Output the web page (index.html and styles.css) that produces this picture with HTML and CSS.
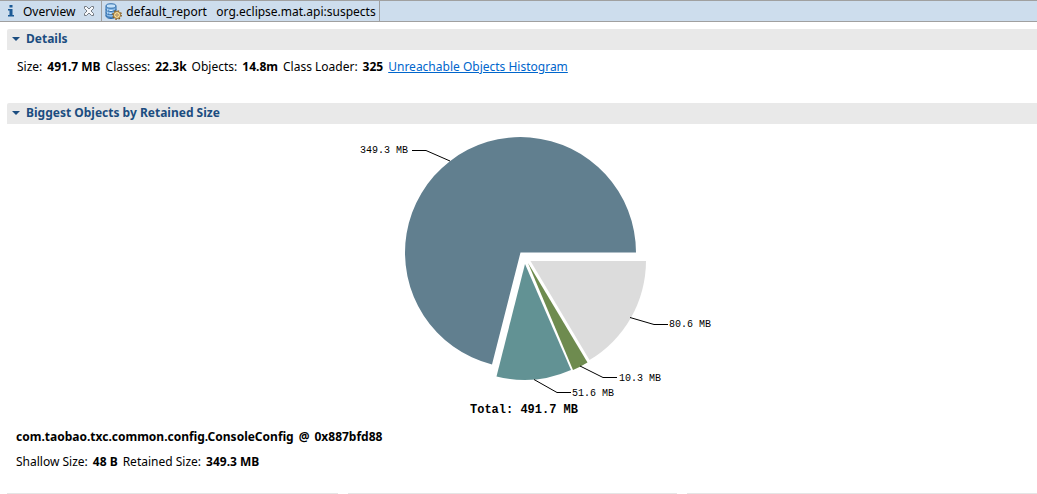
FILE: index.html
```
<!DOCTYPE html>
<html lang="en">
<head>
<meta charset="utf-8">
<title>Overview</title>
<link rel="stylesheet" href="styles.css">
</head>
<body>
<nav class="tabs">
  <div class="tab tab-active">
    <svg class="info-icon" width="8" height="14" viewBox="0 0 8 14" aria-hidden="true"><path d="M2.500 1h3v2.500h-3zM1 5h4.500v6H7v1.500H1V11h1.500V6.500H1z" fill="#1b5a96"/></svg>
    <a class="tab-label" href="#overview">Overview</a>
    <button class="close" type="button" aria-label="Close Overview">
      <svg width="12" height="12" viewBox="0 0 12 12"><path d="M1.500 1.500h2L6 4l2.500-2.500h2v2L8 6l2.500 2.500v2h-2L6 8l-2.500 2.500h-2v-2L4 6 1.500 3.500z" fill="#f6f8fb" stroke="#747b83"/></svg>
    </button>
  </div>
  <div class="tab">
    <svg width="17" height="17" viewBox="0 0 17 17" aria-hidden="true">
      <path d="M1 3.500v9.500c0 1.500 2.500 2.500 5 2.500s5-1 5-2.500V3.500z" fill="#8bbbe8" stroke="#2868a8"/>
      <path d="M1 6.500c1 2.500 9 2.500 10 0M1 9.700c1 2.500 9 2.500 10 0M1 12.500c1 2 7 2.500 9 1" fill="none" stroke="#2868a8"/>
      <path d="M2.500 6.500v1M2.500 9.500v1M4.500 7.500h3M4.500 10.700h2" stroke="#e2f2ff" fill="none"/>
      <ellipse cx="6" cy="3" rx="5" ry="2.200" fill="#c3e1fa" stroke="#2868a8"/>
      <circle cx="12" cy="12" r="4.200" fill="none" stroke="#875a1c" stroke-width="1.400" stroke-dasharray="1.650 1.649"/>
      <circle cx="12" cy="12" r="3.500" fill="#fbe09a" stroke="#875a1c" stroke-width="0.800"/>
      <circle cx="12" cy="12" r="1.200" fill="#fff" stroke="#875a1c" stroke-width="0.800"/>
    </svg>
    <a class="tab-label" href="#report">default_report&nbsp;&nbsp; org.eclipse.mat.api:suspects</a>
  </div>
</nav>
<main class="page" id="overview">
  <section class="details">
    <h2 class="heading"><button class="toggle" type="button" aria-expanded="true"><span class="arrow"></span>Details</button></h2>
    <p class="stats summary"><span>Size:</span> <b>491.7 MB</b> <span>Classes:</span> <b>22.3k</b> <span>Objects:</span> <b>14.8m</b> <span>Class Loader:</span> <b>325</b> <a class="link" href="#histogram">Unreachable Objects Histogram</a></p>
  </section>
  <section>
    <h2 class="heading"><button class="toggle" type="button" aria-expanded="true"><span class="arrow"></span>Biggest Objects by Retained Size</button></h2>
    <div class="chart">
      <svg width="400" height="300" viewBox="322 124 400 300" role="img" aria-label="Biggest objects by retained size">
        <path d="M520.500 252.500H636A115.500 115.500 0 1 0 492 364.500Z" fill="#617f8f"/>
        <path d="M525 264L496.500 376.500A115.500 115.500 0 0 0 571 370Z" fill="#629294"/>
        <path d="M528 263L573 370A115.500 115.500 0 0 0 587.500 362.500Z" fill="#6e8b4f"/>
        <path d="M530.500 261H646A115.500 115.500 0 0 1 589.500 360Z" fill="#dcdcdc"/>
        <path class="leader" d="M412 150.500H426L450 161M630 317.500L654 324.500H668M580 366L603 377.500H617M534 379.500L557 392.500H571"/>
        <text class="value" x="360" y="153">349.3 MB</text>
        <text class="value" x="669" y="327">80.6 MB</text>
        <text class="value" x="619" y="381">10.3 MB</text>
        <text class="value" x="572" y="396">51.6 MB</text>
        <text class="total" x="524" y="413">Total: 491.7 MB</text>
      </svg>
    </div>
    <div class="object">
      <p class="stats"><b>com.taobao.txc.common.config.ConsoleConfig</b> <b>@</b> <b>0x887bfd88</b></p>
      <p class="stats"><span>Shallow Size:</span> <b>48 B</b> <span>Retained Size:</span> <b>349.3 MB</b></p>
    </div>
  </section>
  <div class="panels"><div class="panel"></div><div class="panel"></div><div class="panel"></div></div>
</main>
</body>
</html>
```
FILE: styles.css
```
body {
  margin: 0;
  background: #fff;
  color: #000;
  font: 12px/16px "Noto Sans", "Open Sans", sans-serif;
}
.tabs {
  display: flex;
  box-sizing: border-box;
  height: 22px;
  background: #cddded;
  border-top: 1px solid #a0a0a0;
  border-bottom: 1px solid #a0a0a0;
}
.tab {
  display: flex;
  align-items: center;
  gap: 4px;
  padding: 0 3px;
  border-right: 1px solid #a0a0a0;
}
.tab-active {
  gap: 8px;
  padding: 0 6px 0 7px;
}
.tab-label {
  padding-top: 2px;
  color: #000;
  text-decoration: none;
  white-space: nowrap;
}
.close {
  display: flex;
  padding: 0;
  border: 0;
  background: none;
}
.page {
  padding: 7px 0 0 7px;
}
.heading {
  margin: 0;
  background: #e9e9e9;
  border-radius: 2px 0 0 0;
}
.toggle {
  display: flex;
  align-items: center;
  gap: 6px;
  height: 21px;
  padding: 0 5px 2px;
  border: 0;
  background: none;
  color: #1c4d80;
  font: bold 12px/16px "Noto Sans", "Open Sans", sans-serif;
}
.arrow {
  border: 4px solid transparent;
  border-top-color: #1c4d80;
  border-bottom: 0;
}
.details {
  padding-bottom: 28px;
}
.stats {
  display: flex;
  flex-wrap: wrap;
  column-gap: 5px;
  margin: 0;
}
.summary {
  padding: 9px 10px 0;
}
.link {
  color: #0066cc;
}
.chart {
  display: flex;
  justify-content: center;
}
.leader {
  fill: none;
  stroke: #000;
}
.value {
  font: 10px "Liberation Mono", monospace;
}
.total {
  font: bold 12px "Liberation Mono", monospace;
  text-anchor: middle;
}
.object {
  display: grid;
  gap: 9px;
  padding: 5px 9px 23px;
}
.panels {
  display: grid;
  grid-template-columns: 331fr 329fr 350fr;
  gap: 10px;
}
.panel {
  border-top: 1px solid #e5e5e5;
}
```
